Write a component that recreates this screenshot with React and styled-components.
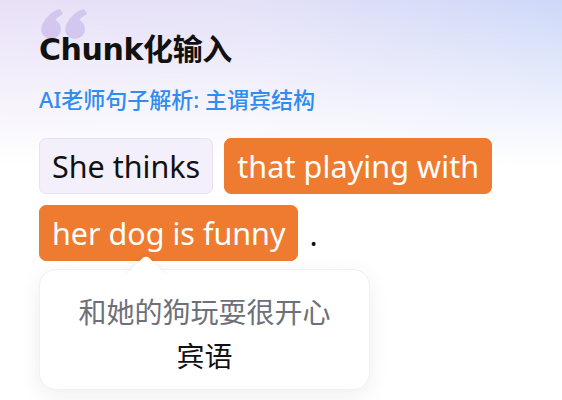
import React from "react";
import styled, { createGlobalStyle } from "styled-components";

const Global = createGlobalStyle`
  html, body { margin: 0; padding: 0; background: #ffffff; }
  * { box-sizing: border-box; }
`;

const Page = styled.div`
  position: relative;
  width: 562px;
  height: 400px;
  overflow: hidden;
  padding: 32px 0 0 39px;
  background:
    linear-gradient(to bottom, rgba(255,255,255,0) 0px, rgba(255,255,255,0.55) 90px, #ffffff 165px),
    linear-gradient(to right, #e8e0f7 0%, #e4e1f8 45%, #cdd8f8 100%);
  font-family: "Noto Sans", "Noto Sans CJK SC", sans-serif;
`;

const Quote = styled.svg`
  position: absolute;
  left: 41px;
  top: 9px;
  width: 46px;
  height: 30px;
`;

const Title = styled.h1`
  position: relative;
  margin: 0;
  font-family: "DejaVu Sans", "Noto Sans CJK SC", sans-serif;
  font-weight: 700;
  font-size: 30px;
  line-height: 36px;
  color: #111111;
  letter-spacing: -0.4px;
`;

const Subtitle = styled.div`
  margin-top: 16px;
  font-family: "Noto Sans", "Noto Sans CJK SC", sans-serif;
  font-size: 22px;
  font-weight: 500;
  line-height: 30px;
  color: #2f8cf0;
`;

const Chunks = styled.div`
  margin-top: 24px;
  display: flex;
  flex-wrap: wrap;
  gap: 11px;
  width: 470px;
  align-items: flex-end;
`;

const Chunk = styled.span`
  display: inline-block;
  height: 56px;
  line-height: 54px;
  padding: 0 12px;
  border-radius: 7px;
  font-size: 30.5px;
  letter-spacing: ${(p) => (p.$spread ? "0.1px" : "0")};
  white-space: nowrap;
  color: ${(p) => (p.$active ? "#ffffff" : "#111111")};
  background: ${(p) => (p.$active ? "#ee7b2f" : "#f3f0fb")};
  border: 1px solid ${(p) => (p.$active ? "#ee7b2f" : "#e7e1f5")};
`;

const Period = styled.span`
  font-size: 30.5px;
  line-height: 54px;
  color: #111111;
`;

const Tooltip = styled.div`
  position: relative;
  margin-top: 8px;
  width: 331px;
  height: 121px;
  border-radius: 17px;
  background: #ffffff;
  border: 1px solid #f1f1f3;
  box-shadow: 0 6px 22px rgba(30, 30, 60, 0.07);
  padding-top: 19px;
  display: flex;
  flex-direction: column;
  align-items: center;
  font-family: "Noto Sans CJK SC", sans-serif;
  font-size: 28px;

  &::before {
    content: "";
    position: absolute;
    left: 91px;
    top: -15px;
    width: 30px;
    height: 30px;
    background: #ffffff;
    border-radius: 5px 0 0 0;
    transform: translateY(6px) rotate(45deg);
    box-shadow: -2px -2px 4px rgba(30, 30, 60, 0.03);
  }
`;

const Meaning = styled.div`
  position: relative;
  line-height: 44px;
  color: #6d7078;
`;

const Role = styled.div`
  position: relative;
  line-height: 44px;
  color: #111111;
`;

export default function App() {
  return (
    <>
      <Global />
      <Page>
        <Quote viewBox="0 0 46 30">
          <g fill="#d3c7f0">
            <circle cx="10" cy="20" r="10" />
            <path d="M1.5 17 C4 8 11 2 19 0 L22 5 C16 8 12.5 12 12.5 17 Z" />
            <circle cx="34" cy="20" r="10" />
            <path d="M25.5 17 C28 8 35 2 43 0 L46 5 C40 8 36.5 12 36.5 17 Z" />
          </g>
        </Quote>
        <Title>Chunk化输入</Title>
        <Subtitle>AI老师句子解析: 主谓宾结构</Subtitle>
        <Chunks>
          <Chunk>She thinks</Chunk>
          <Chunk $active $spread>that playing with</Chunk>
          <Chunk $active>her dog is funny</Chunk>
          <Period>.</Period>
        </Chunks>
        <Tooltip>
          <Meaning>和她的狗玩耍很开心</Meaning>
          <Role>宾语</Role>
        </Tooltip>
      </Page>
    </>
  );
}
